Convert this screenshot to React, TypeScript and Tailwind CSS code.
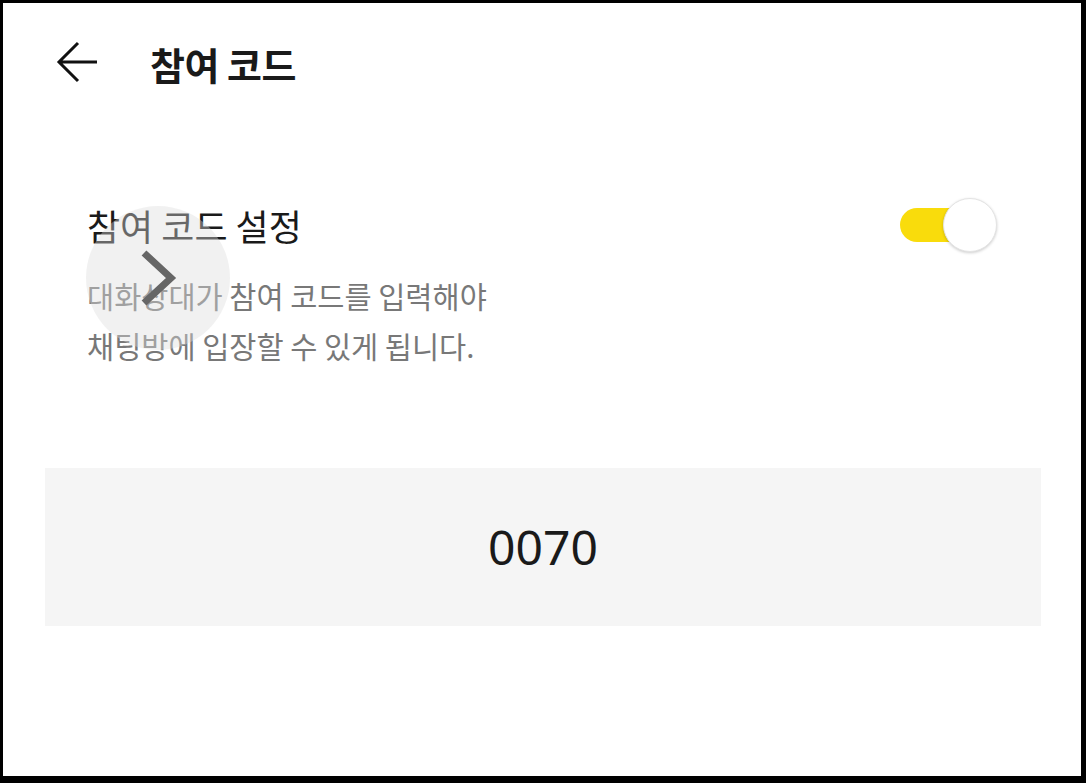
import { useState } from 'react';

const KR = { fontFamily: '"Noto Sans CJK KR", "Noto Sans", sans-serif' };

export default function App() {
  const [enabled, setEnabled] = useState(true);

  return (
    <div
      className="relative box-border h-[783px] w-[1086px] overflow-hidden border-t-[3px] border-r-[5px] border-b-[7px] border-l-[3px] border-black bg-white"
      style={KR}
    >
      {/* Header */}
      <div className="flex h-[122px] items-center pl-[52px]">
        <button className="flex h-[46px] w-[46px] items-center justify-center">
          <svg width="46" height="46" viewBox="0 0 46 46" fill="none">
            <path d="M42 21H4M23 2L4 21L23 40" stroke="#111" strokeWidth="3" strokeLinejoin="miter" />
          </svg>
        </button>
        <h1 className="ml-[49px] text-[38px] leading-none font-bold tracking-[-0.5px] text-[#1a1a1a]">참여 코드</h1>
      </div>

      {/* Setting row */}
      <div className="mt-[73px] flex h-[54px] items-center justify-between pr-[84px] pl-[84px]">
        <span className="text-[36px] leading-[40px] text-[#1a1a1a]">참여 코드 설정</span>
        <button
          onClick={() => setEnabled(!enabled)}
          className="relative h-[54px] w-[97px]"
        >
          <span
            className={`absolute top-[10px] left-0 h-[34px] w-[80px] rounded-full ${
              enabled ? 'bg-[#f9dc0c]' : 'bg-[#d6d6d6]'
            }`}
          />
          <span
            className={`absolute top-0 h-[54px] w-[54px] rounded-full border border-[#e4e4e4] bg-white shadow-[0_1px_3px_rgba(0,0,0,0.2)] ${
              enabled ? 'right-0' : 'left-[-10px]'
            }`}
          />
        </button>
      </div>

      <div className="mt-[18px] pl-[84px] text-[29.5px] leading-[50px] text-[#787878]">
        <p>대화상대가 참여 코드를 입력해야</p>
        <p>채팅방에 입장할 수 있게 됩니다.</p>
      </div>

      {/* Code box */}
      <div className="mt-[98px] mr-[40px] ml-[42px] flex h-[158px] items-center justify-center bg-[#f5f5f5]">
        <span className="text-[48px] leading-none text-[#1a1a1a]" style={{ fontFamily: '"Noto Sans", sans-serif' }}>
          0070
        </span>
      </div>

      {/* Floating navigation bubble */}
      <div className="absolute top-[203px] left-[83px] flex h-[144px] w-[144px] items-center justify-center rounded-full bg-[rgba(220,220,220,0.4)]">
        <svg width="40" height="60" viewBox="0 0 40 60" fill="none">
          <path d="M6 5L33 30L6 55" stroke="#666" strokeWidth="7" />
        </svg>
      </div>
    </div>
  );
}
